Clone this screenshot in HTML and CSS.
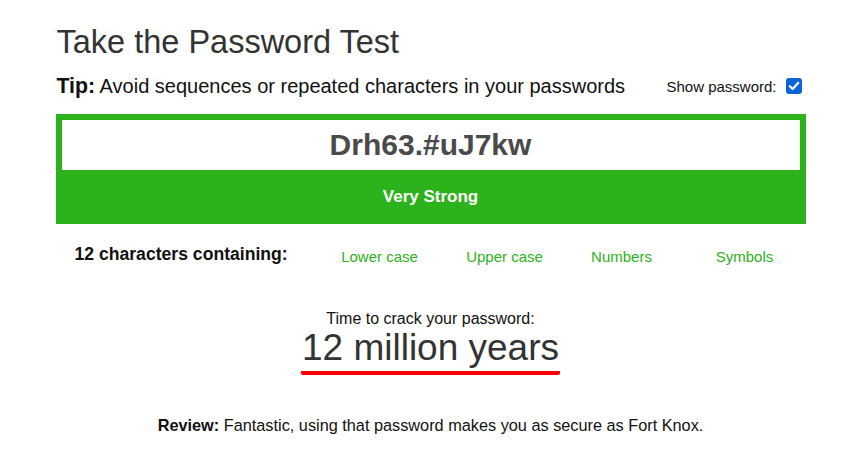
FILE: index.html
```html
<!DOCTYPE html>
<html>
<head>
<meta charset="utf-8">
<link rel="stylesheet" href="styles.css">
</head>
<body>
<div class="wrap">
  <h1 class="title">Take the Password Test</h1>
  <div class="tip-row">
    <p class="tip"><b>Tip:</b> Avoid sequences or repeated characters in your passwords</p>
    <label class="show">Show password: <span class="check"><svg viewBox="0 0 16 16" width="16" height="16"><rect x="0" y="0" width="16" height="16" rx="3" fill="#0b63d8"/><path d="M3.8 8.2 L6.7 11 L12.3 4.8" fill="none" stroke="#fff" stroke-width="2.2" stroke-linecap="round" stroke-linejoin="round"/></svg></span></label>
  </div>
  <div class="meter">
    <div class="pw">Drh63.#uJ7kw</div>
    <div class="strength">Very Strong</div>
  </div>
  <div class="chars">
    <div class="count">12 characters containing:</div>
    <div class="kind">Lower case</div>
    <div class="kind">Upper case</div>
    <div class="kind">Numbers</div>
    <div class="kind last">Symbols</div>
  </div>
  <div class="crack">
    <div class="crack-label">Time to crack your password:</div>
    <div class="crack-time">12 million years</div>
  </div>
  <p class="review"><b>Review:</b> Fantastic, using that password makes you as secure as Fort Knox.</p>
</div>
</body>
</html>
```
FILE: styles.css
```css
html, body {
  margin: 0;
  padding: 0;
  background: #fff;
}
body {
  font-family: "Liberation Sans", Arial, sans-serif;
  color: #111;
}
.wrap {
  width: 750px;
  margin: 0 auto;
  padding-top: 22px;
}
.title {
  margin: 0 0 0 1px;
  font-size: 32.5px;
  font-weight: normal;
  color: #333;
  line-height: 40px;
}
.tip-row {
  display: flex;
  align-items: center;
  justify-content: space-between;
  margin-top: 6px;
  height: 36px;
}
.tip {
  margin: 0 0 0 1px;
  font-size: 20px;
  color: #111;
}
.tip b {
  font-size: 21.3px;
}
.show {
  display: flex;
  align-items: center;
  gap: 9px;
  font-size: 15px;
  color: #111;
  margin-right: 4px;
}
.check {
  display: flex;
}
.meter {
  margin-top: 10px;
  background: #2cb21a;
  padding: 6px 6px 0 6px;
}
.pw {
  background: #fff;
  height: 50px;
  line-height: 50px;
  text-align: center;
  font-size: 30px;
  font-weight: bold;
  color: #4a4a4a;
}
.strength {
  height: 54px;
  line-height: 54px;
  text-align: center;
  color: #fff;
  font-weight: bold;
  font-size: 17px;
}
.chars {
  display: grid;
  grid-template-columns: 262px 124px 126px 108px 130px;
  align-items: center;
  margin-top: 18px;
  height: 24px;
}
.count {
  padding-left: 19px;
  font-weight: bold;
  font-size: 17.6px;
  color: #111;
}
.kind {
  text-align: center;
  font-size: 15px;
  color: #2cb21a;
  padding-top: 5px;
}
.kind.last {
  padding-left: 8px;
}
.crack {
  margin: 44px auto 0;
  text-align: center;
  width: fit-content;
}
.crack-label {
  font-size: 16px;
  color: #111;
  line-height: 18px;
}
.crack-time {
  font-size: 37px;
  color: #333;
  line-height: 40px;
  padding: 0 1px 3px;
  border-bottom: 4px solid #f00;
  border-radius: 0 0 2px 2px;
}
.review {
  margin: 41px 0 0;
  text-align: center;
  font-size: 16.3px;
  color: #111;
}
```
